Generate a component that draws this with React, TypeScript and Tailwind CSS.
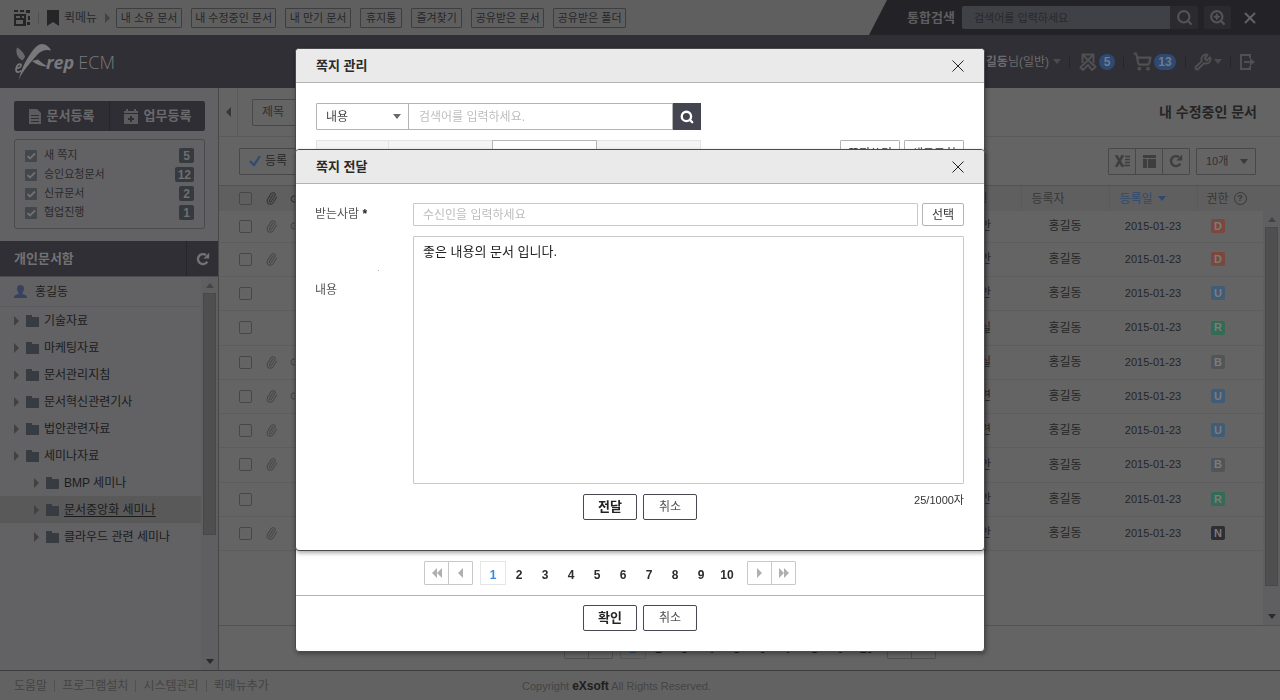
import React, { useState } from "react";
import { Link2, Paperclip, Search, ShoppingCart, Wrench, X, ZoomIn } from "lucide-react";

const quickMenu = [
  { label: "내 소유 문서", width: "w-[66px]" },
  { label: "내 수정중인 문서", width: "w-[85px]" },
  { label: "내 만기 문서", width: "w-[66px]" },
  { label: "휴지통", width: "w-[42px]" },
  { label: "즐겨찾기", width: "w-[51px]" },
  { label: "공유받은 문서", width: "w-[73px]" },
  { label: "공유받은 폴더", width: "w-[73px]" },
];

const alerts = [
  { label: "새 쪽지", count: 5 },
  { label: "승인요청문서", count: 12 },
  { label: "신규문서", count: 2 },
  { label: "협업진행", count: 1 },
];

const folders = [
  { label: "기술자료", child: false },
  { label: "마케팅자료", child: false },
  { label: "문서관리지침", child: false },
  { label: "문서혁신관련기사", child: false },
  { label: "법안관련자료", child: false },
  { label: "세미나자료", child: false },
  { label: "BMP 세미나", child: true },
  { label: "문서중앙화 세미나", child: true, selected: true },
  { label: "클라우드 관련 세미나", child: true },
];

const levelColor: Record<string, string> = {
  D: "bg-[#7a483d]",
  U: "bg-[#405c76]",
  R: "bg-[#346b55]",
  B: "bg-[#525558]",
  N: "bg-[#2e2e33]",
};

const rows = [
  { type: "안", clip: true, link: true, level: "D" },
  { type: "안", clip: true, link: false, level: "D" },
  { type: "안", clip: false, link: false, level: "U" },
  { type: "실", clip: false, link: false, level: "R" },
  { type: "실", clip: true, link: true, level: "B" },
  { type: "련", clip: true, link: true, level: "U" },
  { type: "련", clip: true, link: false, level: "U" },
  { type: "안", clip: true, link: false, level: "B" },
  { type: "안", clip: false, link: false, level: "R" },
  { type: "안", clip: true, link: false, level: "N" },
];

type TriProps = { dir: "up" | "down" | "left" | "right"; className?: string };

function Triangle({ dir, className = "" }: TriProps) {
  const paths = { up: "M0 5h8L4 0z", down: "M0 0h8L4 5z", left: "M5 0v10L0 5z", right: "M0 0v10l5-5z" };
  const upright = dir === "up" || dir === "down";
  return (
    <svg
      className={`shrink-0 ${upright ? "h-[5px] w-2" : "h-[10px] w-[5px]"} ${className}`}
      viewBox={upright ? "0 0 8 5" : "0 0 5 10"}
      fill="currentColor"
      aria-hidden="true"
    >
      <path d={paths[dir]} />
    </svg>
  );
}

function Refresh({ className = "" }: { className?: string }) {
  return (
    <svg className={`size-[14px] shrink-0 ${className}`} viewBox="0 0 14 14" aria-hidden="true">
      <path d="M11.3 9.6A5 5 0 1 1 10 3.1" fill="none" stroke="currentColor" strokeWidth="2.4" />
      <path d="M13.2.6v6H7.4z" fill="currentColor" />
    </svg>
  );
}

function Clip({ className = "" }: { className?: string }) {
  return <Paperclip size={13} strokeWidth={2.2} className={`-rotate-12 ${className}`} aria-hidden="true" />;
}

function Logo() {
  return (
    <a href="#" aria-label="eXrep ECM" className="flex items-center text-[#79797b]">
      <svg className="h-[38px] w-[38px] shrink-0" viewBox="0 0 38 38" aria-hidden="true">
        <path d="M3 4.500c3.500 2 7.500 6 8 9.500l-2.500 3.500C4 15.500 1 10 3 4.500z" fill="#69696b" />
        <path d="M4.500 37.500C6 31 9.500 21 15 13 20 5 24 1 28 1c4 0 7.500 3 9 6.500-5-1.500-10 0-14 4.500C17 19 8 28.500 4.500 37.500z" fill="currentColor" />
        <path d="M18 18l6-1.500 3 2.500c2.500 2 5 3.500 8 4.500-6 .5-12-1.500-17-5.500z" fill="currentColor" />
        <path
          d="M2.500 25.500c3-.5 5-2 4.500-4-1-1.500-5 .5-5 5 0 3.500 3.500 3 5.500 1"
          fill="none"
          stroke="currentColor"
          strokeWidth="1.700"
        />
      </svg>
      <span className="-ml-[6px] flex items-baseline gap-1 font-['Open_Sans',sans-serif] text-[18px] leading-6">
        <b className="font-bold italic">rep</b>
        <span className="font-light">ECM</span>
      </span>
    </a>
  );
}

function TopBar() {
  return (
    <div className="flex h-[35px] shrink-0 bg-[#5f5f60]">
      <div className="flex flex-1 items-center pl-[14px]">
        <svg className="size-4" viewBox="0 0 16 16" aria-hidden="true">
          <path d="M0 0h4v2H0zM6 0h4v2H6zM12 0h4v3h-4zM14 6h2v4h-2zM13 12h3v3h-3z" fill="#252527" />
          <path d="M1 9h9v6H1z" fill="none" stroke="#252527" strokeWidth="2" />
          <path d="M0 4h12v12h-2V6H8v3H6V6H2v3H0z" fill="#252527" />
        </svg>
        <span className="ml-2 h-3 w-px bg-[#505050]" />
        <svg className="ml-2 h-4 w-3" viewBox="0 0 12 16" aria-hidden="true">
          <path d="M0 0h12v16l-6-4-6 4z" fill="#252527" />
        </svg>
        <span className="ml-[5px] text-[12px] text-[#29292b]">퀵메뉴</span>
        <Triangle dir="right" className="ml-2 text-[#434343]" />
        <nav className="ml-[6px] flex gap-[9px]">
          {quickMenu.map((m) => (
            <button
              key={m.label}
              type="button"
              className={`h-5 shrink-0 rounded-[1px] border border-[#3e3e40] text-[11px] leading-[18px] whitespace-nowrap text-[#262628] ${m.width}`}
            >
              {m.label}
            </button>
          ))}
        </nav>
      </div>
      <form className="flex w-[411px] items-center bg-[#232227] pl-[38px] [clip-path:polygon(18px_0,100%_0,100%_100%,0_100%)]">
        <label htmlFor="global-search" className="w-[55px] text-[13px] font-bold text-[#5e5e60]">
          통합검색
        </label>
        <input
          id="global-search"
          placeholder="검색어를 입력하세요"
          className="h-[23px] w-[208px] rounded-l-[2px] bg-[#404146] px-3 text-[11px] outline-none placeholder:text-[#28282b]"
        />
        <button type="button" aria-label="검색" className="flex h-[23px] w-7 items-center justify-center rounded-r-[2px] bg-[#2b2a2f] text-[#545456]">
          <Search size={17} strokeWidth={3} />
        </button>
        <button type="button" aria-label="상세검색" className="ml-[6px] flex h-[23px] w-[27px] items-center justify-center rounded-[2px] bg-[#2b2a2f] text-[#545456]">
          <ZoomIn size={17} strokeWidth={3} />
        </button>
        <button type="button" aria-label="검색 닫기" className="ml-[10px] text-[#626264]">
          <X size={18} strokeWidth={2.5} />
        </button>
      </form>
    </div>
  );
}

function HeaderDivider() {
  return <span className="h-3 w-px bg-[#26252b]" />;
}

function Header() {
  const badge = "flex h-4 items-center justify-center rounded-full bg-[#2e4a72] text-[12px] font-bold text-[#717b8b]";
  return (
    <header className="flex h-[53px] shrink-0 items-center bg-[#302f35] pl-[14px] text-[#505053]">
      <Logo />
      <div className="ml-[415px] flex flex-1 gap-[108px]" aria-hidden="true">
        <span className="-mt-2 size-[14px] rounded-full bg-[#66666a]" />
        <span className="-mt-2 size-[14px] rounded-full bg-[#242428]" />
      </div>
      <div className="flex items-center pr-6">
        <button type="button" className="flex items-center gap-1 text-[12px] whitespace-nowrap text-[#6c6c6e]">
          <span>
            <b>홍길동</b>님(일반)
          </span>
          <Triangle dir="down" className="text-[#4b4b4f]" />
        </button>
        <span className="ml-2 flex items-center">
          <HeaderDivider />
          <button type="button" aria-label="작업 문서 5" className="ml-[9px] flex items-center gap-[2px]">
            <svg className="size-[18px]" viewBox="0 0 18 18" fill="none" stroke="currentColor" strokeWidth="2" aria-hidden="true">
              <path d="M3.500 10V1.500h11V10M4 2l10.500 10.500M14 2L3.500 12.500" />
              <path d="M3.500 12l-2 2.500 2.500 2.500L9 12l4 5 3.500-3-2.500-3" />
            </svg>
            <span className={`w-4 ${badge}`}>5</span>
          </button>
        </span>
        <span className="ml-2 flex items-center">
          <HeaderDivider />
          <button type="button" aria-label="바구니 13" className="ml-[9px] flex items-center gap-[2px]">
            <ShoppingCart size={19} strokeWidth={2.8} />
            <span className={`w-[22px] ${badge}`}>13</span>
          </button>
        </span>
        <span className="ml-[9px] flex items-center">
          <HeaderDivider />
          <button type="button" aria-label="설정" className="ml-2 flex items-center gap-[2px]">
            <Wrench size={18} strokeWidth={2.5} />
            <Triangle dir="down" className="text-[#4b4b4f]" />
          </button>
        </span>
        <span className="ml-2 flex items-center">
          <HeaderDivider />
          <button type="button" aria-label="로그아웃" className="ml-2">
            <svg className="h-4 w-[17px]" viewBox="0 0 17 16" aria-hidden="true">
              <path d="M11 4V1H2v14h9v-3" fill="none" stroke="currentColor" strokeWidth="2" />
              <path d="M5 7h6V4l5 4-5 4V9H5z" fill="currentColor" />
            </svg>
          </button>
        </span>
      </div>
    </header>
  );
}

function Scrollbar({ className = "", thumb }: { className?: string; thumb: string }) {
  return (
    <div className={`flex w-[17px] shrink-0 flex-col items-center bg-[#5f5f61] py-[6px] ${className}`} aria-hidden="true">
      <Triangle dir="up" className="text-[#444]" />
      <div className={`mt-[5px] w-[13px] border border-[#484848] bg-[#4f4f4f] ${thumb}`} />
      <span className="flex-1" />
      <Triangle dir="down" className="text-[#2a2a2a]" />
    </div>
  );
}

function Sidebar() {
  const action = "flex flex-1 items-center justify-center gap-[6px] text-[13px] font-bold whitespace-nowrap text-[#6a6a6c]";
  return (
    <aside className="flex w-[219px] shrink-0 flex-col border-r border-[#474747] bg-[#626264]">
      <div className="mt-[13px] mr-[13px] ml-[14px] flex h-[30px] rounded-[2px] bg-[#2f2e34]">
        <button type="button" className={`${action} border-r border-[#26252a]`}>
          <svg className="h-[15px] w-3 text-[#5c5c5e]" viewBox="0 0 12 15" aria-hidden="true">
            <path d="M0 0h8l4 4v11H0zM2 6v1h8V6zM2 9v1h8V9zM2 12v1h8v-1z" fill="currentColor" fillRule="evenodd" />
          </svg>
          문서등록
        </button>
        <button type="button" className={action}>
          <svg className="h-[15px] w-[14px] text-[#5c5c5e]" viewBox="0 0 14 15" aria-hidden="true">
            <path d="M0 2h2V0h2v2h6V0h2v2h2v2H0zM0 5h14v10H0zM6 7v2H4v2h2v2h2v-2h2V9H8V7z" fill="currentColor" fillRule="evenodd" />
          </svg>
          업무등록
        </button>
      </div>
      <ul className="mt-2 mr-[13px] ml-[14px] rounded-[3px] border border-[#4a4a4c] px-[10px] py-[6px]">
        {alerts.map((a) => (
          <li key={a.label} className="flex h-[19px] items-center">
            <label className="flex flex-1 items-center gap-[7px] text-[11px] text-[#2a2a2c]">
              <span className="grid size-3 place-items-center rounded-[1px] bg-[#43464a]">
                <input type="checkbox" defaultChecked className="peer size-3 appearance-none [grid-area:1/1]" />
                <svg className="pointer-events-none hidden size-[10px] text-[#6f7173] [grid-area:1/1] peer-checked:block" viewBox="0 0 10 10" aria-hidden="true">
                  <path d="M1.500 5l2.500 2.500 5-5" fill="none" stroke="currentColor" strokeWidth="1.800" />
                </svg>
              </span>
              {a.label}
            </label>
            <span className="flex h-[15px] min-w-[15px] items-center justify-center rounded-[2px] bg-[#363a3f] px-[3px] text-[12px] font-bold text-[#6e6f71]">
              {a.count}
            </span>
          </li>
        ))}
      </ul>
      <div className="mt-3 flex h-[35px] items-center bg-[#302f35] text-[#727274]">
        <h2 className="flex-1 pl-[14px] text-[13px] font-bold">개인문서함</h2>
        <button type="button" aria-label="새로고침" className="flex h-full w-8 items-center justify-center border-l border-[#26252a]">
          <Refresh />
        </button>
      </div>
      <div className="flex min-h-0 flex-1 border-t border-[#4c4c4e]">
        <div className="min-w-0 flex-1">
          <div className="flex h-[30px] items-center gap-2 border-b border-[#5a5a5c] pl-[14px] text-[12px] text-[#1d1d1e]">
            <svg className="h-[13px] w-[13px]" viewBox="0 0 13 13" aria-hidden="true">
              <path
                d="M6.500 0C9 0 10 1.500 10 3.500S9 7 8.300 8c0 1 1 1.500 3 2 1.500.5 1.700 1 1.700 3H0c0-2 .2-2.500 1.700-3 2-.5 3-1 3-2C4 7 3 5.500 3 3.500S4 0 6.500 0z"
                fill="#38425f"
              />
            </svg>
            홍길동
          </div>
          <ul className="text-[12px] text-[#1b1b1c]">
            {folders.map((f) => (
              <li key={f.label}>
                <a
                  href="#"
                  className={`flex h-[27px] items-center whitespace-nowrap ${f.child ? "pl-[34px]" : "pl-[14px]"} ${f.selected ? "bg-[#59595a] underline underline-offset-2" : ""}`}
                >
                  <Triangle dir="right" className="text-[#414141]" />
                  <svg className="mr-[5px] ml-[7px] h-3 w-[13px] shrink-0" viewBox="0 0 13 12" aria-hidden="true">
                    <path d="M0 0h6v2h7v10H0z" fill="#373c42" />
                  </svg>
                  {f.label}
                </a>
              </li>
            ))}
          </ul>
        </div>
        <Scrollbar thumb="h-[242px]" />
      </div>
    </aside>
  );
}

function Check({ label }: { label: string }) {
  return (
    <input
      type="checkbox"
      aria-label={label}
      className="block size-[13px] appearance-none rounded-[2px] border border-[#474747] checked:bg-[#474747]"
    />
  );
}

function Pager({ dim }: { dim?: boolean }) {
  const arrow = dim
    ? "flex h-6 w-[25px] items-center justify-center border border-[#505050] text-[#4a4a4a]"
    : "flex h-6 w-[25px] items-center justify-center border border-[#c8c8c8] text-[#b0b0b0]";
  return (
    <nav className="flex justify-center" aria-label={dim ? "문서 페이지" : "쪽지 페이지"}>
      <div className="flex">
        <button type="button" aria-label="처음" className={`rounded-l-[1px] ${arrow}`}>
          <Triangle dir="left" />
          <Triangle dir="left" />
        </button>
        <button type="button" aria-label="이전" className={`-ml-px rounded-r-[1px] ${arrow}`}>
          <Triangle dir="left" />
        </button>
      </div>
      <div className={`mx-[7px] flex text-[12px] font-bold ${dim ? "text-[#1f1f1f]" : "text-[#2c2c2c]"}`}>
        {[1, 2, 3, 4, 5, 6, 7, 8, 9, 10].map((n) => (
          <button
            key={n}
            type="button"
            className={`h-6 w-[26px] pt-[3px] ${n === 1 ? (dim ? "border border-[#585858] text-[#2d4a70]" : "border border-[#e6e6e6] text-[#3a87dc]") : ""}`}
          >
            {n}
          </button>
        ))}
      </div>
      <div className="flex">
        <button type="button" aria-label="다음" className={`rounded-l-[1px] ${arrow}`}>
          <Triangle dir="right" />
        </button>
        <button type="button" aria-label="마지막" className={`-ml-px rounded-r-[1px] ${arrow}`}>
          <Triangle dir="right" />
          <Triangle dir="right" />
        </button>
      </div>
    </nav>
  );
}

function SelectBox({ label, options, className }: { label: string; options: string[]; className: string }) {
  return (
    <div className={`grid items-center rounded-[1px] border ${className}`}>
      <select aria-label={label} className="h-full w-full appearance-none bg-transparent pl-[9px] outline-none [grid-area:1/1]">
        {options.map((o) => (
          <option key={o}>{o}</option>
        ))}
      </select>
      <Triangle dir="down" className="pointer-events-none mr-[7px] justify-self-end opacity-80 [grid-area:1/1]" />
    </div>
  );
}

function DocumentList() {
  const tool = "flex h-[27px] w-[28px] items-center justify-center border border-[#484848] text-[#3e3e3e]";
  return (
    <main className="flex min-w-0 flex-1 flex-col bg-[#646464] text-[12px] text-[#262626]">
      <div className="flex h-[49px] shrink-0 items-center border-b border-[#5a5a5a]">
        <button type="button" aria-label="목록 접기" className="flex h-full w-[19px] items-center justify-center border-r border-[#5a5a5a] text-[#363636]">
          <Triangle dir="left" />
        </button>
        <SelectBox label="검색 항목" options={["제목"]} className="ml-[14px] h-[27px] w-[93px] border-[#484848] text-[#303030]" />
        <h1 className="flex-1 pr-[23px] text-right text-[14px] font-bold text-[#242424]">내 수정중인 문서</h1>
      </div>
      <div className="flex h-12 shrink-0 items-center justify-between pr-6 pl-5">
        <button type="button" className="flex h-[27px] items-center gap-1 rounded-[1px] border border-[#484848] px-[9px]">
          <svg className="size-3" viewBox="0 0 12 12" aria-hidden="true">
            <path d="M1 6l4 4 6-9" fill="none" stroke="#304a70" strokeWidth="2.200" />
          </svg>
          등록
        </button>
        <div className="flex">
          <button type="button" aria-label="엑셀" className={`rounded-l-[1px] ${tool}`}>
            <svg className="h-3 w-[15px]" viewBox="0 0 15 12" stroke="currentColor" aria-hidden="true">
              <path d="M1 0l7 12M8 0L1 12" strokeWidth="2.600" />
              <path d="M10 1.500h5M10 4.500h5M10 7.500h5M9 10.500h6" strokeWidth="1.500" />
            </svg>
          </button>
          <button type="button" aria-label="화면 구성" className={`-ml-px ${tool}`}>
            <svg className="h-[13px] w-[13px]" viewBox="0 0 13 13" fill="currentColor" aria-hidden="true">
              <path d="M0 0h13v3H0zM0 4h4v9H0zM5 4h8v9H5z" />
            </svg>
          </button>
          <button type="button" aria-label="새로고침" className={`-ml-px rounded-r-[1px] ${tool}`}>
            <Refresh />
          </button>
          <SelectBox label="표시 개수" options={["10개"]} className="ml-[6px] h-[27px] w-[60px] border-[#484848] text-[11px] text-[#303030]" />
        </div>
      </div>
      <div className="flex min-h-0 flex-1 border-y border-[#525252]">
        <div className="min-w-0 flex-1">
          <table className="w-full table-fixed border-collapse">
            <colgroup>
              <col className="w-[41px]" />
              <col className="w-[26px]" />
              <col className="w-[26px]" />
              <col />
              <col className="w-[88px]" />
              <col className="w-[88px]" />
              <col className="w-[66px]" />
            </colgroup>
            <thead className="bg-[#5f5f5f] text-left text-[#383838]">
              <tr className="h-[25px]">
                <th className="pl-5 font-normal"><Check label="전체 선택" /></th>
                <th className="pl-[5px] font-normal"><Clip /></th>
                <th className="pl-1 font-normal"><Link2 size={14} aria-label="링크" /></th>
                <th className="pr-[33px] text-right font-normal">유형</th>
                <th className="border-l border-[#5a5a5a] pl-[10px] font-normal">등록자</th>
                <th className="border-l border-[#5a5a5a] pl-[10px] font-normal text-[#2e4a70]">
                  <span className="flex items-center gap-[5px]">등록일 <Triangle dir="down" /></span>
                </th>
                <th className="border-l border-[#5a5a5a] pl-[9px] font-normal">
                  <span className="flex items-center gap-[5px]">
                    권한
                    <span className="flex size-[13px] items-center justify-center rounded-full border border-[#383838] text-[9px] leading-none font-bold">?</span>
                  </span>
                </th>
              </tr>
            </thead>
            <tbody>
              {rows.map((r, i) => (
                <tr key={i} className="h-[34px] border-b border-[#5d5d5d] first:h-[31px] nth-[4n]:h-[35px]">
                  <td className="pl-5"><Check label={`문서 ${i + 1} 선택`} /></td>
                  <td className="pl-[5px] text-[#4a4a4a]">{r.clip && <Clip />}</td>
                  <td className="pl-1 text-[#4a4a4a]">{r.link && <Link2 size={14} />}</td>
                  <td className="pr-[30px] text-right">{r.type}</td>
                  <td className="text-center">홍길동</td>
                  <td className="text-center text-[11px]">2015-01-23</td>
                  <td className="pl-[14px]">
                    <span className={`flex size-[14px] items-center justify-center rounded-[2px] text-[11px] leading-none font-bold text-[#7c7c7c] ${levelColor[r.level]}`}>
                      {r.level}
                    </span>
                  </td>
                </tr>
              ))}
            </tbody>
          </table>
        </div>
        <div className="flex flex-col">
          <div className="h-[25px] bg-[#5f5f5f]" />
          <Scrollbar thumb="h-[359px]" className="flex-1" />
        </div>
      </div>
      <div className="h-11 shrink-0 pt-[9px]">
        <Pager dim />
      </div>
    </main>
  );
}

function Footer() {
  const links = ["도움말", "프로그램설치", "시스템관리", "퀵메뉴추가"];
  return (
    <footer className="flex h-[30px] shrink-0 items-center border-t border-[#3c3c3c] bg-[#626262] text-[12px] text-[#444]">
      <nav className="flex w-[522px] items-center pl-[14px]">
        {links.map((l, i) => (
          <a key={l} href="#" className={i ? "flex items-center before:mx-[7px] before:h-3 before:w-px before:bg-[#525252]" : ""}>
            {l}
          </a>
        ))}
      </nav>
      <p className="text-[11px]">
        Copyright <b className="text-[12px] text-[#1e1e1e]">eXsoft</b> All Rights Reserved.
      </p>
    </footer>
  );
}

function CloseIcon() {
  return (
    <svg className="size-3" viewBox="0 0 12 12" stroke="#222" strokeWidth="1" aria-hidden="true">
      <path d="M.5.5l11 11M11.500.5l-11 11" />
    </svg>
  );
}

function Modal({ title, height, children }: { title: string; height: string; children: React.ReactNode }) {
  return (
    <div className="fixed inset-0 flex items-center justify-center">
      <section
        role="dialog"
        aria-label={title}
        className={`flex w-[690px] flex-col overflow-hidden rounded-[4px] border border-[#4a4a4e] bg-white shadow-[1px_2px_4px_rgba(0,0,0,0.35)] ${height}`}
      >
        <header className="flex h-[34px] shrink-0 items-center justify-between border-b border-[#b4b4b4] bg-[#eaeaea] pr-5 pl-5">
          <h2 className="text-[13px] font-bold text-[#2a2a2a]">{title}</h2>
          <button type="button" aria-label={`${title} 닫기`}>
            <CloseIcon />
          </button>
        </header>
        {children}
      </section>
    </div>
  );
}

function DialogButtons({ confirm }: { confirm: string }) {
  const base = "h-[26px] w-[54px] rounded-[2px] border border-[#484852]";
  return (
    <div className="flex justify-center gap-[6px]">
      <button type="button" className={`${base} text-[13px] font-bold text-[#222]`}>{confirm}</button>
      <button type="button" className={`${base} text-[12px] text-[#555]`}>취소</button>
    </div>
  );
}

function MessageManager() {
  const side = "h-[27px] w-[60px] rounded-[1px] border border-[#b4b4b4] text-[12px] text-[#333]";
  return (
    <Modal title="쪽지 관리" height="h-[604px]">
      <div className="flex-1 px-5 pt-5">
        <form className="flex h-[27px]">
          <SelectBox label="쪽지 검색 항목" options={["내용"]} className="w-[93px] border-[#b4b4b4] text-[12px] text-[#444]" />
          <input
            aria-label="쪽지 검색어"
            placeholder="검색어를 입력하세요."
            className="-ml-px w-[265px] border border-[#b4b4b4] px-[10px] text-[12px] outline-none placeholder:text-[#bdbdbd]"
          />
          <button type="button" aria-label="쪽지 검색" className="flex w-7 items-center justify-center bg-[#454552] text-white">
            <Search size={14} strokeWidth={4} />
          </button>
        </form>
        <div className="mt-[10px] flex justify-between">
          <div className="flex h-[27px] w-[385px]" aria-hidden="true">
            <span className="w-[73px] border border-[#e4e4e4] bg-[#f4f4f4]" />
            <span className="-ml-px w-[104px] border border-r-0 border-[#e4e4e4] bg-[#f4f4f4]" />
            <span className="w-[105px] border border-[#b8b8b8]" />
            <span className="w-[104px] border border-l-0 border-[#e4e4e4] bg-[#f4f4f4]" />
          </div>
          <div className="flex gap-1">
            <button type="button" className={side}>쪽지쓰기</button>
            <button type="button" className={side}>새로고침</button>
          </div>
        </div>
      </div>
      <div className="border-b border-[#b4b4b4] pr-[60px] pb-[10px]">
        <Pager />
      </div>
      <div className="pt-[9px] pb-5">
        <DialogButtons confirm="확인" />
      </div>
    </Modal>
  );
}

function ForwardMessage() {
  const [text, setText] = useState("좋은 내용의 문서 입니다.");
  return (
    <Modal title="쪽지 전달" height="h-[402px]">
      <form className="grid grid-cols-[98px_1fr] gap-y-[10px] pt-[19px] pr-5 pl-[19px] text-[12px] text-[#555]">
        <label htmlFor="receiver" className="leading-[22px]">
          받는사람 <b className="text-[#222]">*</b>
        </label>
        <div className="flex gap-1">
          <input
            id="receiver"
            placeholder="수신인을 입력하세요"
            className="h-[23px] min-w-0 flex-1 rounded-[1px] border border-[#c8c8c8] px-[9px] text-[12px] outline-none placeholder:text-[#bdbdbd]"
          />
          <button type="button" className="h-[23px] w-[42px] rounded-[2px] border border-[#b4b4b4] leading-5 text-[#333]">선택</button>
        </div>
        <label htmlFor="message" className="flex flex-col pt-[34px]">
          <span className="ml-[63px] size-px bg-[#aaa]" />
          <span className="mt-2 leading-[22px]">내용</span>
        </label>
        <textarea
          id="message"
          value={text}
          onChange={(e) => setText(e.target.value)}
          className="h-[248px] w-full resize-none rounded-[1px] border border-[#c8c8c8] px-[9px] py-[5px] text-[13px] leading-5 text-[#222] outline-none"
        />
      </form>
      <div className="grid grid-cols-[1fr_auto_1fr] px-5 pt-[10px]">
        <span />
        <DialogButtons confirm="전달" />
        <span className="text-right text-[11px] leading-3 text-[#333]">25/1000자</span>
      </div>
    </Modal>
  );
}

export default function App() {
  return (
    <div className="flex h-screen flex-col overflow-hidden font-['Liberation_Sans','Noto_Sans_CJK_KR',sans-serif]">
      <TopBar />
      <Header />
      <div className="flex min-h-0 flex-1">
        <Sidebar />
        <DocumentList />
      </div>
      <Footer />
      <MessageManager />
      <ForwardMessage />
    </div>
  );
}
